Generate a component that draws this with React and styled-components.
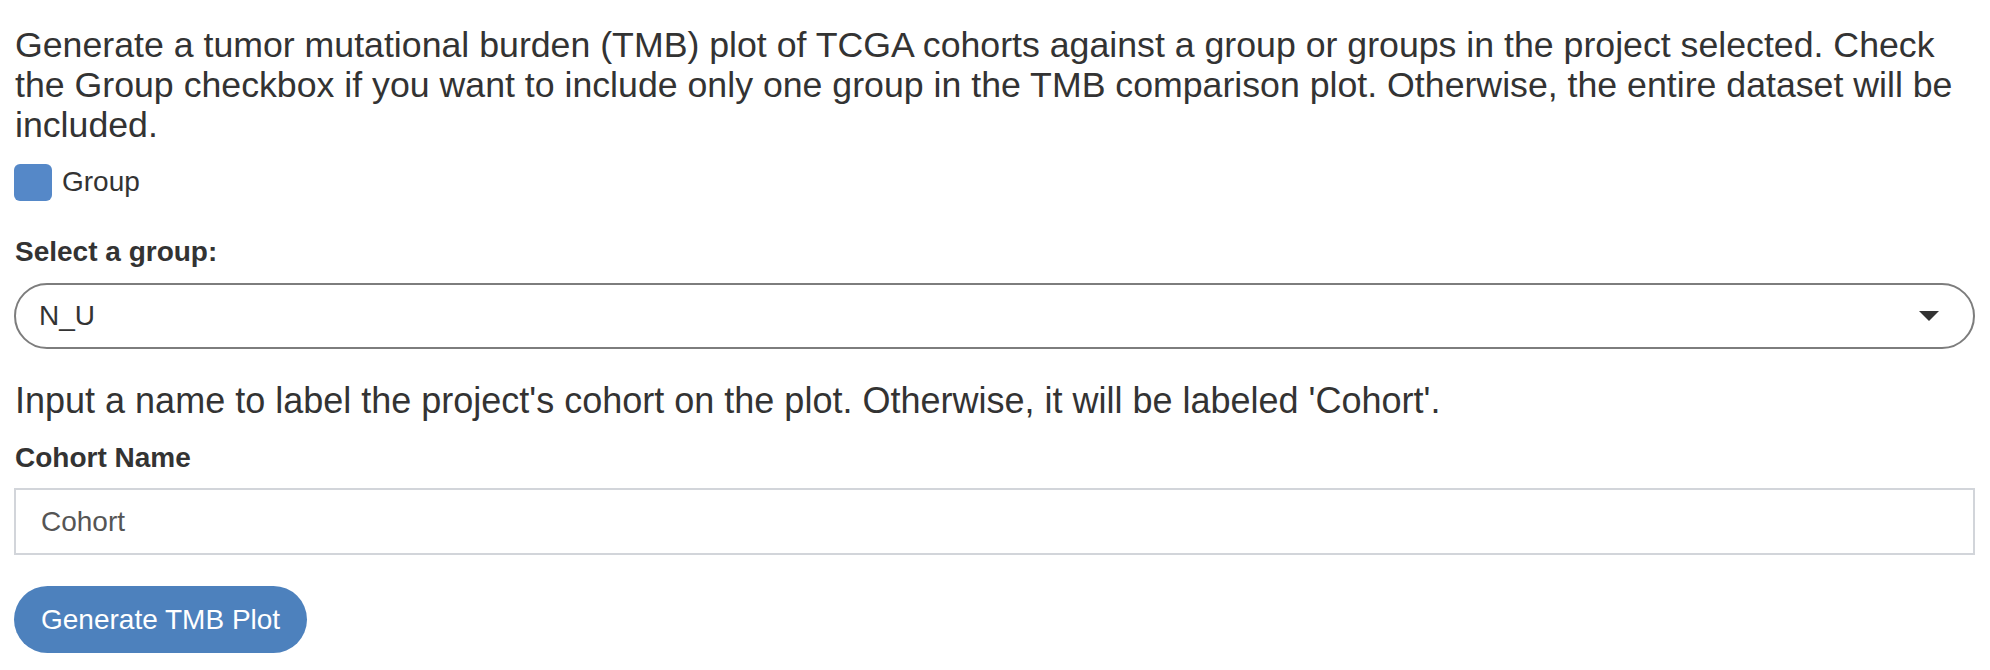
import React from 'react';
import styled, { createGlobalStyle } from 'styled-components';

const GlobalStyle = createGlobalStyle`
  body {
    margin: 0;
    background: #ffffff;
    font-family: "Liberation Sans", Arial, Helvetica, sans-serif;
    color: #333333;
  }
`;

const Panel = styled.div`
  padding: 25px 15px 0 14px;
`;

const HelpText = styled.p`
  margin: ${(p) => p.$margin || '0'};
  font-size: ${(p) => p.$size || '35.7px'};
  line-height: 40px;
  color: #333333;
  padding-left: 1px;
`;

const CheckRow = styled.label`
  display: flex;
  align-items: center;
  gap: 10px;
  height: 40px;
  margin-top: 17px;
  font-size: 28px;
  line-height: 40px;
`;

const CheckBox = styled.span`
  width: 38px;
  height: 37px;
  border-radius: 6px;
  background: #5588c8;
  flex: none;
`;

const FieldLabel = styled.div`
  margin-top: ${(p) => p.$top || '0'};
  font-size: 28px;
  line-height: 40px;
  font-weight: 700;
  color: #333333;
  padding-left: 1px;
`;

const SelectBox = styled.div`
  margin-top: 11px;
  height: 66px;
  box-sizing: border-box;
  border: 2px solid #7d7d7d;
  border-radius: 33px;
  display: flex;
  align-items: center;
  justify-content: space-between;
  padding: 0 34px 0 23px;
  font-size: 28px;
  color: #333333;
`;

const TextInput = styled.input`
  display: block;
  margin-top: 10px;
  width: 100%;
  height: 67px;
  box-sizing: border-box;
  border: 2px solid #d2d5da;
  border-radius: 0;
  padding: 0 25px;
  font-family: inherit;
  font-size: 28px;
  color: #555555;
  outline: none;
`;

const Button = styled.button`
  margin-top: 31px;
  height: 67px;
  padding: 0 27px;
  border: none;
  border-radius: 34px;
  background: #4d81bd;
  color: #ffffff;
  font-family: inherit;
  font-size: 28px;
`;

const App = () => {
  return (
    <>
      <GlobalStyle />
      <Panel>
        <HelpText>
          Generate a tumor mutational burden (TMB) plot of TCGA cohorts against a group or groups in the project selected. Check the Group checkbox if you want to include only one group in the TMB comparison plot. Otherwise, the entire dataset will be included.
        </HelpText>
        <CheckRow>
          <CheckBox />
          Group
        </CheckRow>
        <FieldLabel $top="30px">Select a group:</FieldLabel>
        <SelectBox>
          <span>N_U</span>
          <svg width="20" height="10" viewBox="0 0 20 10">
            <path d="M0 0 L20 0 L10 10 Z" fill="#333333" />
          </svg>
        </SelectBox>
        <HelpText $margin="32px 0 0 0" $size="36px">
          Input a name to label the project's cohort on the plot. Otherwise, it will be labeled 'Cohort'.
        </HelpText>
        <FieldLabel $top="17px">Cohort Name</FieldLabel>
        <TextInput defaultValue="Cohort" />
        <Button>Generate TMB Plot</Button>
      </Panel>
    </>
  );
};

export default App;
